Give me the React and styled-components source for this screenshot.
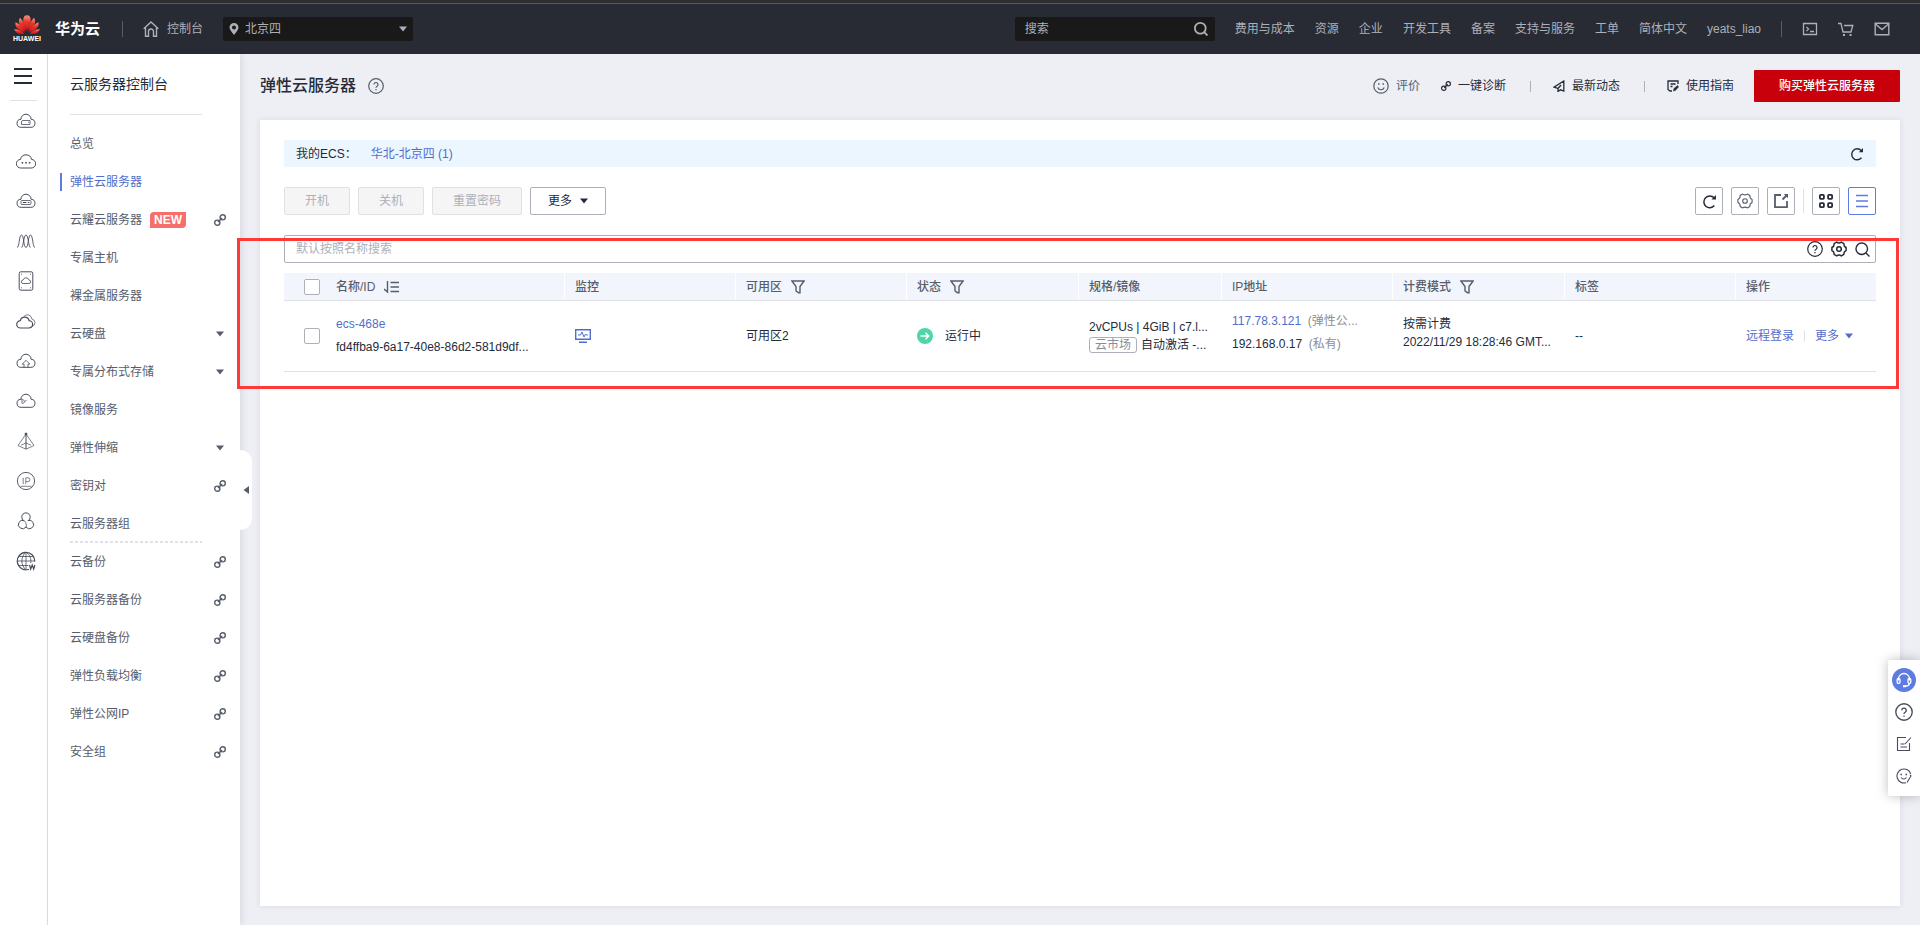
import React from "react";
import styled, { createGlobalStyle } from "styled-components";

const colorText = "#252b3a";
const colorGrey = "#575d6c";
const colorMuted = "#8a8e99";
const colorBorder = "#adb0b8";
const colorLine = "#dfe1e6";
const colorLink = "#526ecc";
const colorRed = "#c7000b";

const cloud =
  "M5.2 16.3a4 4 0 0 1-.3-8A5.1 5.1 0 0 1 15.1 8.300a4 4 0 0 1-.3 8z";

// icons of the service rail, drawn on a 20 x 20 grid
const rail_icons = [
  {
    name: "弹性云服务器",
    shape: (
      <>
        <path d={cloud} />
        <path d="M5.500 13.500h8.500V9.500H7a1.500 1.500 0 0 0-1.500 1.500zM12 11.300h1" strokeWidth="0.8" />
      </>
    )
  },
  {
    name: "云耀云服务器",
    shape: (
      <>
        <path d="M4.800 17a4.300 4.300 0 0 1-.3-8.600 5.600 5.600 0 0 1 11 0 4.300 4.300 0 0 1-.3 8.600z" />
        <path d="M5.600 11.800h1.600M9.200 11.800h1.600M12.800 11.800h1.600" strokeWidth="1.6" />
      </>
    )
  },
  {
    name: "裸金属服务器",
    shape: (
      <>
        <path d={cloud} />
        <rect x="5" y="9.500" width="10" height="4" rx="0.8" strokeWidth="0.8" />
        <path d="M6.800 11.500h3.600M11.800 11.500h1.600" />
      </>
    )
  },
  {
    name: "弹性伸缩",
    shape: (
      <path
        d="M1 16.500C3.500 16.500 3 4 5.500 4S7.500 16.500 10 16.500 12 4 14.500 4 16.500 16.500 19 16.500M5.500 16.500C7.500 16.500 7.500 4 10 4s2.500 12.500 4.500 12.500"
        strokeWidth="0.9"
      />
    )
  },
  {
    name: "云硬盘",
    shape: (
      <>
        <rect x="3.200" y="0.800" width="13.600" height="18.400" rx="1.600" />
        <path d="M7 12.500a1.700 1.700 0 0 1 0-3.400 3.100 3.100 0 0 1 6 0 1.700 1.700 0 0 1 0 3.400z" strokeWidth="0.8" />
        <path d="M5 3.200h.8M14.200 3.200h.8M5 16.800h.8M14.200 16.800h.8" />
      </>
    )
  },
  {
    name: "专属云",
    shape: (
      <>
        <path d="M4.600 17a3.700 3.700 0 0 1-.3-7.400 4.500 4.500 0 0 1 8.800 0A3.700 3.700 0 0 1 12.800 17z" strokeWidth="1.200" />
        <path d="M8 5.400a4.500 4.500 0 0 1 7.900 2.700A3.700 3.700 0 0 1 16.300 15.300" strokeWidth="0.7" />
      </>
    )
  },
  {
    name: "云备份",
    shape: (
      <>
        <path d={cloud} />
        <path d="M8 16.300v-3.200H6.200L10 9.300l3.800 3.800H12v3.200" strokeWidth="0.8" />
      </>
    )
  },
  {
    name: "镜像服务",
    shape: (
      <>
        <path d={cloud} />
        <path d="M4.900 8.300c2.300-.3 3.300.8 3.400 2.400M6 12.500V9M6.500 13l4-4" strokeWidth="0.8" />
      </>
    )
  },
  {
    name: "虚拟私有云",
    shape: (
      <>
        <path d="M10 3L2 14.500l8 3.700 8-3.700zM5 14.200l5-2.200 5 2.200" strokeWidth="0.7" />
        <circle cx="10" cy="3" r="1" fill="currentColor" />
        <path d="M10 3v15" />
      </>
    )
  },
  {
    name: "弹性公网IP",
    shape: (
      <>
        <circle cx="10" cy="10" r="8.600" strokeWidth="0.9" />
        <path d="M7.200 6.800v6.400M9.800 13.200V6.800h2.200a1.900 1.900 0 0 1 0 3.800H9.800M4.500 15.300h11" strokeWidth="0.7" />
      </>
    )
  },
  {
    name: "弹性负载均衡",
    shape: (
      <>
        <path d="M7.200 9.200a4.200 4.200 0 1 1 5.600 0" />
        <path d="M8.300 9.700a4.200 4.200 0 1 0 1.700 6.300 4.200 4.200 0 1 0 1.700-6.300" />
        <path d="M10 16c.8-1.600.3-4-1.700-6.300" strokeWidth="0.8" />
      </>
    )
  },
  {
    name: "域名注册",
    shape: (
      <>
        <path d="M13 18.200A8.700 8.700 0 1 1 18.700 10.500" strokeWidth="1.200" />
        <path d="M10 1.200v17.600M1.200 10h17.600M2.500 5.500h15M2.500 14.500h10M10 1.200c-5.500 4.500-5.500 13 0 17.600M10 1.200c4.500 2.800 5.300 6.800 4.700 10.800" strokeWidth="0.8" />
        <path d="M13.500 14l1.200 4 1.500-4 1.500 4 1.200-4" strokeWidth="1.200" />
      </>
    )
  }
];

const menu_list = [
  { label: "总览" },
  { label: "弹性云服务器", active: true },
  { label: "云耀云服务器", badge: "NEW", end: "link" },
  { label: "专属主机" },
  { label: "裸金属服务器" },
  { label: "云硬盘", end: "caret" },
  { label: "专属分布式存储", end: "caret" },
  { label: "镜像服务" },
  { label: "弹性伸缩", end: "caret" },
  { label: "密钥对", end: "link" },
  { label: "云服务器组", divider: true },
  { label: "云备份", end: "link" },
  { label: "云服务器备份", end: "link" },
  { label: "云硬盘备份", end: "link" },
  { label: "弹性负载均衡", end: "link" },
  { label: "弹性公网IP", end: "link" },
  { label: "安全组", end: "link" }
];

const header_links = [
  "费用与成本",
  "资源",
  "企业",
  "开发工具",
  "备案",
  "支持与服务",
  "工单",
  "简体中文"
];

const GlobalStyle = createGlobalStyle`
  *,
  *::before,
  *::after {
    box-sizing: border-box;
  }

  body {
    margin: 0;
    font-family: "Liberation Sans", "Noto Sans CJK SC", sans-serif;
    font-size: 12px;
    line-height: 18px;
    color: ${colorText};
  }

  button,
  input,
  select {
    font: inherit;
  }

  a {
    text-decoration: none;
  }
`;

const Svg = styled.svg`
  flex: 0 0 auto;
  display: block;
  fill: none;
  stroke: currentColor;
  stroke-width: ${({ $stroke }) => $stroke || 1};
`;

const Icon = ({ size = 16, height, stroke, box = "0 0 16 16", children }) => (
  <Svg
    width={size}
    height={height || size}
    viewBox={box}
    $stroke={stroke}
    aria-hidden="true"
  >
    {children}
  </Svg>
);

const CaretIcon = () => (
  <Icon size={8} height={6} box="0 0 8 6">
    <path d="M0 0.500h8L4 5.500z" fill="currentColor" stroke="none" />
  </Icon>
);

const ChainIcon = ({ size = 12 }) => (
  <Icon size={size} box="0 0 12 12" stroke={1.4}>
    <circle cx="3.300" cy="8.700" r="2.600" />
    <circle cx="8.700" cy="3.300" r="2.600" />
    <path d="M4 8l4-4" strokeWidth="1.600" />
  </Icon>
);

const HelpIcon = ({ size = 16 }) => (
  <Icon size={size} stroke={1.2}>
    <circle cx="8" cy="8" r="7.300" />
    <path d="M6 6.500a2 2 0 1 1 3.100 1.700C8.300 8.700 8 9 8 9.800M8 11v1.300" />
  </Icon>
);

const RefreshIcon = ({ size = 14 }) => (
  <Icon size={size} box="0 0 14 14" stroke={1.4}>
    <path d="M11.500 10.800A5.500 5.500 0 1 1 11.300 3.600" />
    <path d="M13 1v4.200H8.800z" fill="currentColor" stroke="none" />
  </Icon>
);

const SearchIcon = ({ size = 14, stroke = 1.3 }) => (
  <Icon size={size} box="0 0 14 14" stroke={stroke}>
    <circle cx="6.300" cy="6.300" r="5.400" />
    <path d="M10.200 10.200l3.300 3.300" />
  </Icon>
);

const FilterIcon = () => (
  <Icon size={14} box="0 0 14 14" stroke={1.4}>
    <path d="M0.900 1h12.200L9 6.500v6.200H7.500L5 11V6.500z" />
  </Icon>
);

const GearIcon = ({ stroke = 1.1 }) => (
  <Icon size={16} stroke={stroke}>
    <path
      d="M15.100 6.500V9.500Q12.600 10.700 12.900 13.400L10.300 14.900Q8 13.300 5.700 14.900L3.100 13.400Q3.400 10.700 .9 9.500V6.500Q3.400 5.300 3.100 2.600L5.700 1.100Q8 2.700 10.300 1.100L12.900 2.600Q12.600 5.300 15.100 6.500z"
      strokeLinejoin="round"
    />
    <circle cx="8" cy="8" r="2.300" />
  </Icon>
);

const Page = styled.div`
  min-height: 100vh;
  display: flex;
  flex-direction: column;
  background: #eeeff5;
`;

const TopStrip = styled.div`
  height: 4px;
  background: #2e2e2e;
  border-bottom: 1px solid #595a58;
`;

const Header = styled.header`
  height: 50px;
  display: flex;
  align-items: center;
  padding: 0 30px 0 13px;
  background: #282b33;
  color: ${colorBorder};
`;

const Logo = styled.a`
  display: flex;
  align-items: center;
  gap: 14px;
  margin-right: 2px;
  color: #fff;
  font-size: 15px;
  font-weight: 700;
`;

const LogoMark = styled.span`
  display: flex;
  flex-direction: column;
  align-items: center;
  width: 28px;
  font-size: 7px;
  line-height: 8px;
`;

const HeaderRule = styled.span`
  width: 1px;
  height: 16px;
  margin: 0 20px;
  background: #575d6c;
`;

const HeaderLink = styled.a`
  display: flex;
  align-items: center;
  gap: 8px;
  color: ${colorBorder};
`;

const RegionBox = styled.label`
  display: flex;
  align-items: center;
  width: 190px;
  height: 24px;
  margin-left: 20px;
  padding: 0 6px 0 5px;
  border-radius: 2px;
  background: #191919;

  select {
    flex: 1;
    appearance: none;
    padding: 0 0 0 5px;
    border: 0;
    outline: 0;
    background: transparent;
    color: ${colorBorder};
  }
`;

const HeaderSearch = styled.label`
  display: flex;
  align-items: center;
  width: 200px;
  height: 24px;
  margin-left: auto;
  padding: 0 7px 0 10px;
  border-radius: 2px;
  background: #191919;

  input {
    flex: 1;
    min-width: 0;
    padding: 0;
    border: 0;
    outline: 0;
    background: transparent;
    color: ${colorBorder};
  }

  input::placeholder {
    color: ${colorBorder};
    opacity: 1;
  }
`;

const HeaderNav = styled.nav`
  display: flex;
  gap: 20px;
  margin-left: 20px;
`;

const HeaderTools = styled.div`
  display: flex;
  gap: 20px;
`;

const PlainButton = styled.button`
  display: flex;
  align-items: center;
  gap: 6px;
  padding: 0;
  border: 0;
  background: transparent;
  color: inherit;
  cursor: pointer;
`;

const Body = styled.div`
  flex: 1;
  display: flex;
`;

const Rail = styled.nav`
  flex: 0 0 48px;
  padding-top: 14px;
  border-right: 1px solid ${colorLine};
  background: #fff;
`;

const RailToggle = styled(PlainButton)`
  margin-left: 14px;
  color: ${colorText};
`;

const RailList = styled.div`
  margin: 16px 10px 0;
  border-top: 1px solid ${colorLine};
`;

const RailLink = styled.a`
  display: flex;
  align-items: center;
  height: 40px;
  padding-left: 6px;
  color: #464c59;
`;

const Sidebar = styled.aside`
  position: relative;
  flex: 0 0 192px;
  padding-top: 20px;
  background: #fff;
  box-shadow: 2px 0 6px rgba(37, 43, 58, 0.1);
`;

const SidebarTitle = styled.h2`
  margin: 0 38px 10px 22px;
  padding-bottom: 20px;
  border-bottom: 1px solid ${colorLine};
  font-size: 14px;
  line-height: 20px;
  font-weight: 400;
`;

const MenuItem = styled.a`
  display: flex;
  align-items: center;
  height: 38px;
  padding: 0 14px 0 22px;
  color: ${({ $active }) => ($active ? colorLink : colorGrey)};

  &::before {
    content: "";
    display: ${({ $active }) => ($active ? "block" : "none")};
    width: 2px;
    height: 18px;
    margin: 0 8px 0 -10px;
    background: #5e7ce0;
  }
`;

const MenuEnd = styled.span`
  display: flex;
  justify-content: center;
  width: 12px;
  margin-left: auto;
`;

const MenuDivider = styled.hr`
  height: 2px;
  margin: -2px 38px 0 22px;
  border: 0;
  background: repeating-linear-gradient(
    90deg,
    ${colorLine} 0 3px,
    transparent 3px 5px
  );
`;

const NewBadge = styled.span`
  margin-left: 8px;
  padding: 0 4px;
  border-radius: 4px 0 4px 0;
  background: #f66f6a;
  color: #fff;
  font-weight: 700;
  line-height: 16px;
`;

const CollapseHandle = styled.button`
  position: absolute;
  top: 396px;
  left: 100%;
  width: 12px;
  height: 80px;
  padding: 0 0 0 3px;
  border: 0;
  border-radius: 0 12px 12px 0;
  background: #fff;
  color: ${colorGrey};
`;

const Main = styled.main`
  flex: 1;
  min-width: 0;
  display: flex;
  flex-direction: column;
  padding: 16px 20px 19px;
`;

const TitleRow = styled.div`
  display: flex;
  align-items: center;
  height: 32px;
  margin-bottom: 18px;
`;

const PageTitle = styled.h1`
  margin: 0 12px 0 0;
  font-size: 16px;
  line-height: 24px;
  font-weight: 500;
`;

const Muted = styled.span`
  color: ${({ $light }) => ($light ? colorMuted : colorGrey)};
`;

const TitleActions = styled.div`
  display: flex;
  align-items: center;
  margin-left: auto;
`;

const ActionLink = styled.a`
  display: flex;
  align-items: center;
  gap: 7px;
  color: ${({ $grey }) => ($grey ? colorGrey : colorText)};
`;

const ActionGap = styled.span`
  width: 1px;
  height: 11px;
  margin: ${({ $blank }) => ($blank ? "0 10px" : "0 22px 0 24px")};
  background: ${({ $blank }) => ($blank ? "transparent" : colorBorder)};
`;

const BuyButton = styled.button`
  height: 32px;
  margin-left: 20px;
  padding: 0 25px;
  border: 0;
  border-radius: 1px;
  background: ${colorRed};
  color: #fff;
  font-weight: 500;
`;

const Card = styled.section`
  flex: 1;
  padding: 20px 24px;
  background: #fff;
  box-shadow: 0 0 6px rgba(37, 43, 58, 0.1);
`;

const Banner = styled.div`
  display: flex;
  align-items: center;
  height: 27px;
  margin-bottom: 20px;
  padding: 0 12px;
  border-radius: 2px;
  background: #ebf6ff;

  button {
    margin-left: auto;
  }
`;

const TextLink = styled.a`
  color: ${colorLink};
`;

const Toolbar = styled.div`
  display: flex;
  align-items: center;
  gap: 8px;
  margin-bottom: 20px;
`;

const ToolButton = styled.button`
  display: flex;
  align-items: center;
  gap: 8px;
  height: 28px;
  padding: 0 ${({ $pad }) => $pad || 20}px;
  border: 1px solid ${colorBorder};
  border-radius: 2px;
  background: #fff;
  color: ${colorText};

  &:disabled {
    border-color: ${colorLine};
    background: #f5f5f6;
    color: ${colorBorder};
  }
`;

const IconButton = styled.button`
  display: flex;
  align-items: center;
  justify-content: center;
  width: 28px;
  height: 28px;
  padding: 0;
  border: 1px solid ${({ $active }) => ($active ? "#5e7ce0" : colorBorder)};
  border-radius: 2px;
  background: #fff;
  color: ${({ $active, $grey }) =>
    $active ? "#5e7ce0" : $grey ? colorGrey : colorText};
`;

const ToolRule = styled.span`
  width: 1px;
  height: 24px;
  background: ${colorLine};
`;

const Spacer = styled.span`
  flex: 1;
`;

const ListArea = styled.div`
  position: relative;
`;

const Highlight = styled.div`
  position: absolute;
  inset: 3px -23px -17px -47px;
  border: 3px solid #ff3838;
  pointer-events: none;
  z-index: 2;
`;

const SearchBar = styled.div`
  display: flex;
  align-items: center;
  gap: 8px;
  height: 28px;
  margin-bottom: 10px;
  padding: 0 5px 0 11px;
  border: 1px solid ${colorBorder};
  border-radius: 2px;

  input {
    flex: 1;
    padding: 0;
    border: 0;
    outline: 0;
    background: transparent;
  }

  input::placeholder {
    color: ${colorBorder};
    opacity: 1;
  }
`;

const Table = styled.table`
  width: 100%;
  table-layout: fixed;
  border-collapse: separate;
  border-spacing: 0;
`;

const Th = styled.th`
  width: ${({ $width }) => $width}px;
  height: 28px;
  padding: 0 0 0 ${({ $pad = 10 }) => $pad}px;
  border-bottom: 1px solid ${colorLine};
  background: #f2f5fc;
  box-shadow: ${({ $rule }) => ($rule ? "inset -1px 0 #fff" : "none")};
  color: ${colorGrey};
  font-weight: 500;
  line-height: 16px;
  text-align: left;
`;

const ThInner = styled.span`
  display: flex;
  align-items: center;
  gap: 9px;
`;

const Td = styled.td`
  height: 71px;
  padding: 0 0 ${({ $raised }) => ($raised ? 6 : 0)}px
    ${({ $pad = 10 }) => $pad}px;
  border-bottom: 1px solid ${colorLine};
  white-space: nowrap;
`;

const Checkbox = styled.input`
  appearance: none;
  display: block;
  width: 16px;
  height: 16px;
  margin: 0;
  border: 1px solid ${colorBorder};
  border-radius: 2px;
  background: #fff;
`;

const Line = styled.div`
  line-height: ${({ $tall }) => ($tall ? 23 : 18)}px;
`;

const Inline = styled.div`
  display: flex;
  align-items: center;
  gap: ${({ $gap }) => $gap}px;
`;

const Tag = styled.span`
  padding: 0 5px;
  border: 1px solid ${colorBorder};
  border-radius: 3px;
  color: ${colorMuted};
  line-height: 14px;
`;

const RowRule = styled.span`
  width: 1px;
  height: 12px;
  background: ${colorLine};
`;

const Floating = styled.div`
  position: fixed;
  right: 0;
  bottom: 129px;
  z-index: 3;
  display: flex;
  flex-direction: column;
  align-items: center;
  gap: 8px;
  width: 32px;
  height: 136px;
  padding-top: 8px;
  background: #fff;
  box-shadow: 0 0 12px rgba(0, 0, 0, 0.25);
  color: #464c59;
`;

const FloatButton = styled(PlainButton)`
  justify-content: center;
  width: 24px;
  height: 24px;
  border-radius: 50%;
  background: ${({ $primary }) => ($primary ? "#5e7ce0" : "transparent")};
  color: ${({ $primary }) => ($primary ? "#fff" : "inherit")};
`;

const HuaweiMark = () => (
  <Svg width="26" height="20" viewBox="0 0 26 20" aria-hidden="true">
    <defs>
      <linearGradient id="petal" x1="0" y1="0" x2="0" y2="1">
        <stop offset="0" stopColor="#f5a08a" />
        <stop offset="0.4" stopColor="#e8392c" />
        <stop offset="1" stopColor="#c8101a" />
      </linearGradient>
    </defs>
    <g fill="url(#petal)" stroke="none">
      <path d="M12.600 16C8.500 9.500 8 3 11.300.6l1.400-.3c.8 4 .7 10-.1 15.700z" />
      <path d="M13.400 16C17.500 9.500 18 3 14.700.6l-1.400-.3c-.8 4-.7 10 .1 15.700z" />
      <path d="M11.600 16.800C5 11.500 3.500 6.500 6 2.700c3.500 3.300 5 8.500 5.600 14.100z" />
      <path d="M14.400 16.800C21 11.500 22.500 6.500 20 2.700c-3.500 3.300-5 8.500-5.600 14.100z" />
      <path d="M10.900 17.600C3.500 15 .5 11.500 1.600 7.300c4.500 2 7.500 5.800 9.300 10.300z" />
      <path d="M15.100 17.600c7.400-2.600 10.400-6.100 9.300-10.300-4.500 2-7.500 5.800-9.300 10.300z" />
      <path d="M10.300 18.400C5.500 20 1.800 18.500.2 14.200c4 0 7.500 1.700 10.100 4.200z" />
      <path d="M15.700 18.400c4.800 1.600 8.500.1 10.100-4.200-4 0-7.500 1.700-10.100 4.200z" />
    </g>
  </Svg>
);

const TopHeader = () => (
  <Header>
    <Logo href="#">
      <LogoMark>
        <HuaweiMark />
        HUAWEI
      </LogoMark>
      华为云
    </Logo>
    <HeaderRule />
    <HeaderLink href="#">
      <Icon stroke={1.4}>
        <path d="M.7 7.800L8 1l7.300 6.800M2.500 6.500v8.700h3V10.500a2.500 2.500 0 0 1 5 0v4.700h3V6.500" />
      </Icon>
      控制台
    </HeaderLink>
    <RegionBox>
      <Icon size={12} box="0 0 12 12">
        <path
          d="M6 0a4.500 4.500 0 0 0-4.500 4.500C1.500 7 4 9 6 12c2-3 4.500-5 4.500-7.500A4.500 4.500 0 0 0 6 0zm0 2.500a2 2 0 1 1 0 4 2 2 0 0 1 0-4z"
          fill="currentColor"
          stroke="none"
        />
      </Icon>
      <select aria-label="区域" defaultValue="北京四">
        <option>北京四</option>
      </select>
      <CaretIcon />
    </RegionBox>
    <HeaderSearch>
      <input type="text" placeholder="搜索" aria-label="搜索" />
      <SearchIcon stroke={1.8} />
    </HeaderSearch>
    <HeaderNav>
      {header_links.map(label => (
        <HeaderLink href="#" key={label}>
          {label}
        </HeaderLink>
      ))}
      <HeaderLink href="#">yeats_liao</HeaderLink>
    </HeaderNav>
    <HeaderRule />
    <HeaderTools>
      <PlainButton aria-label="CloudShell">
        <Icon stroke={1.3}>
          <path d="M1.500 2.500h13v11h-13zM4.500 6l2 2-2 2M8 10.500h4" />
        </Icon>
      </PlainButton>
      <PlainButton aria-label="购物车">
        <Icon stroke={1.3}>
          <path d="M0 2.500h3l2 8.500h8l1.800-6.500H6" />
          <path d="M5 14h2M11.500 14h2" strokeWidth="2" />
        </Icon>
      </PlainButton>
      <PlainButton aria-label="消息">
        <Icon stroke={1.4}>
          <path d="M1.200 2.200h13.600v11.600H1.200zM1.500 3L8 8.500 14.500 3" />
        </Icon>
      </PlainButton>
    </HeaderTools>
  </Header>
);

const SideMenu = () => (
  <Sidebar>
    <SidebarTitle>云服务器控制台</SidebarTitle>
    <nav>
      {menu_list.map(({ label, active, badge, end, divider }) => (
        <React.Fragment key={label}>
          <MenuItem href="#" $active={active}>
            {label}
            {badge && <NewBadge>{badge}</NewBadge>}
            {end && (
              <MenuEnd>{end === "link" ? <ChainIcon /> : <CaretIcon />}</MenuEnd>
            )}
          </MenuItem>
          {divider && <MenuDivider />}
        </React.Fragment>
      ))}
    </nav>
    <CollapseHandle aria-label="收起">
      <Icon size={6} height={8} box="0 0 6 8">
        <path d="M6 0v8L.5 4z" fill="currentColor" stroke="none" />
      </Icon>
    </CollapseHandle>
  </Sidebar>
);

const ServerTable = () => (
  <Table>
    <thead>
      <tr>
        <Th $width={52} $pad={20}>
          <Checkbox type="checkbox" aria-label="全选" />
        </Th>
        <Th $width={229} $pad={0} $rule>
          <ThInner>
            名称/ID
            <Icon size={16} stroke={1.4}>
              <path d="M3.500 2v11L0 10M6.500 3.500H15M6.500 8H15M6.500 12.500H15" />
            </Icon>
          </ThInner>
        </Th>
        <Th $width={171} $rule>
          监控
        </Th>
        <Th $width={171} $rule>
          <ThInner>
            可用区
            <FilterIcon />
          </ThInner>
        </Th>
        <Th $width={172} $rule>
          <ThInner>
            状态
            <FilterIcon />
          </ThInner>
        </Th>
        <Th $width={143} $rule>
          规格/镜像
        </Th>
        <Th $width={171} $rule>
          IP地址
        </Th>
        <Th $width={172} $rule>
          <ThInner>
            计费模式
            <FilterIcon />
          </ThInner>
        </Th>
        <Th $width={171} $rule>
          标签
        </Th>
        <Th $width={140}>操作</Th>
      </tr>
    </thead>
    <tbody>
      <tr>
        <Td $pad={20}>
          <Checkbox type="checkbox" aria-label="ecs-468e" />
        </Td>
        <Td $pad={0}>
          <Line $tall>
            <TextLink href="#">ecs-468e</TextLink>
          </Line>
          <Line $tall>fd4ffba9-6a17-40e8-86d2-581d9df...</Line>
        </Td>
        <Td>
          <TextLink href="#" aria-label="监控">
            <Icon stroke={1.4}>
              <path d="M.7 1.700h14.600v9.600H.7zM4 14.300h8" />
              <path d="M3 7h2.500L7 4l2 5 1.500-3 .8 1H13" strokeWidth="1" />
            </Icon>
          </TextLink>
        </Td>
        <Td>可用区2</Td>
        <Td>
          <Inline $gap={12}>
            <Icon size={16}>
              <circle cx="8" cy="8" r="8" fill="#50d4ab" stroke="none" />
              <path
                d="M3.500 8h8M8.500 4.800L11.700 8l-3.200 3.200"
                stroke="#fff"
                strokeWidth="1.500"
              />
            </Icon>
            运行中
          </Inline>
        </Td>
        <Td>
          <Line>2vCPUs | 4GiB | c7.l...</Line>
          <Inline $gap={4}>
            <Tag>云市场</Tag>
            <span>自动激活 -...</span>
          </Inline>
        </Td>
        <Td $raised>
          <Line $tall>
            <TextLink href="#">117.78.3.121</TextLink>{" "}
            <Muted $light>&nbsp;(弹性公...</Muted>
          </Line>
          <Line $tall>
            192.168.0.17 <Muted $light>&nbsp;(私有)</Muted>
          </Line>
        </Td>
        <Td $raised>
          <Line>按需计费</Line>
          <Line>2022/11/29 18:28:46 GMT...</Line>
        </Td>
        <Td>--</Td>
        <Td>
          <Inline $gap={10}>
            <TextLink href="#">远程登录</TextLink>
            <RowRule />
            <TextLink as={PlainButton}>
              更多
              <CaretIcon />
            </TextLink>
          </Inline>
        </Td>
      </tr>
    </tbody>
  </Table>
);

const App = () => (
  <Page>
    <GlobalStyle />
    <TopStrip />
    <TopHeader />
    <Body>
      <Rail>
        <RailToggle aria-label="服务列表">
          <Icon size={18} height={16} box="0 0 18 16" stroke={2}>
            <path d="M0 1h18M0 8h18M0 15h18" />
          </Icon>
        </RailToggle>
        <RailList>
          {rail_icons.map(({ name, shape }) => (
            <RailLink href="#" aria-label={name} key={name}>
              <Icon size={20} box="0 0 20 20">
                {shape}
              </Icon>
            </RailLink>
          ))}
        </RailList>
      </Rail>
      <SideMenu />
      <Main>
        <TitleRow>
          <PageTitle>弹性云服务器</PageTitle>
          <Muted>
            <HelpIcon />
          </Muted>
          <TitleActions>
            <ActionLink href="#" $grey>
              <Icon stroke={1.2}>
                <circle cx="8" cy="8" r="7.200" />
                <path d="M4.800 9.500a3.400 3.400 0 0 0 6.400 0" />
                <path d="M5 6h1.500M9.500 6H11" strokeWidth="1.600" />
              </Icon>
              评价
            </ActionLink>
            <ActionGap $blank />
            <ActionLink href="#">
              <ChainIcon size={10} />
              一键诊断
            </ActionLink>
            <ActionGap />
            <ActionLink href="#">
              <Icon size={12} box="0 0 12 12" stroke={1.3}>
                <path d="M10.800 1v10L7.500 9.800 5 11.500V8.500L1 7.200zM5 8.500l3-3.500" />
              </Icon>
              最新动态
            </ActionLink>
            <ActionGap />
            <ActionLink href="#">
              <Icon size={12} box="0 0 12 12" stroke={1.3}>
                <path d="M11 4V1H1v8.500L3 11h2M3.500 4h5M3.500 6.500h2" />
                <path
                  d="M6.500 11l.5-2.500 3.500-3 1 1.500-3 3.300z"
                  fill="currentColor"
                  strokeWidth="0.600"
                />
              </Icon>
              使用指南
            </ActionLink>
            <BuyButton>购买弹性云服务器</BuyButton>
          </TitleActions>
        </TitleRow>
        <Card>
          <Banner>
            <Inline $gap={14}>
              <span>我的ECS：</span>
              <TextLink href="#">华北-北京四 (1)</TextLink>
            </Inline>
            <PlainButton aria-label="刷新">
              <RefreshIcon />
            </PlainButton>
          </Banner>
          <Toolbar>
            <ToolButton disabled>开机</ToolButton>
            <ToolButton disabled>关机</ToolButton>
            <ToolButton disabled>重置密码</ToolButton>
            <ToolButton $pad={17}>
              更多
              <CaretIcon />
            </ToolButton>
            <Spacer />
            <IconButton aria-label="刷新列表">
              <RefreshIcon size={15} />
            </IconButton>
            <IconButton aria-label="设置" $grey>
              <GearIcon />
            </IconButton>
            <IconButton aria-label="导出" $grey>
              <Icon stroke={1.8}>
                <path d="M8 2H2v12.200h12V8M9.500 6.500l4-4" />
                <path d="M10.800 1H15v4.200z" fill="currentColor" stroke="none" />
              </Icon>
            </IconButton>
            <ToolRule />
            <IconButton aria-label="卡片视图">
              <Icon stroke={1.8}>
                <rect x="1.900" y="1.900" width="4" height="4" rx="0.800" />
                <rect x="10.100" y="1.900" width="4" height="4" rx="0.800" />
                <rect x="1.900" y="10.100" width="4" height="4" rx="0.800" />
                <rect x="10.100" y="10.100" width="4" height="4" rx="0.800" />
              </Icon>
            </IconButton>
            <IconButton aria-label="列表视图" $active>
              <Icon size={14} box="0 0 14 14" stroke={1.4}>
                <path d="M1 1.500h12M1 7h12M1 12.500h12" />
              </Icon>
            </IconButton>
          </Toolbar>
          <ListArea>
            <SearchBar>
              <input
                type="text"
                placeholder="默认按照名称搜索"
                aria-label="按照名称搜索"
              />
              <PlainButton aria-label="帮助">
                <HelpIcon />
              </PlainButton>
              <PlainButton aria-label="搜索设置">
                <GearIcon stroke={1.5} />
              </PlainButton>
              <PlainButton aria-label="搜索">
                <SearchIcon size={15} />
              </PlainButton>
            </SearchBar>
            <ServerTable />
            <Highlight />
          </ListArea>
        </Card>
      </Main>
    </Body>
    <Floating>
      <FloatButton $primary aria-label="在线客服">
        <Icon stroke={1.3}>
          <path d="M2.500 8.500V7a5.500 5.500 0 0 1 11 0v1.500M13.500 11c0 2-2 3-4 3" />
          <rect x="1.200" y="6.500" width="2.800" height="4.800" rx="1.200" />
          <rect x="12" y="6.500" width="2.800" height="4.800" rx="1.200" />
          <path d="M7 14.200h3" strokeWidth="2" />
        </Icon>
      </FloatButton>
      <FloatButton aria-label="常见问题">
        <HelpIcon size={18} />
      </FloatButton>
      <FloatButton aria-label="建议反馈">
        <Icon stroke={1.1}>
          <path d="M10 1.500H1.500v13h12V7M15 1.500L9 8M4.500 8h4M4.500 11h6.500" />
        </Icon>
      </FloatButton>
      <FloatButton aria-label="满意度评价">
        <Icon stroke={1.1}>
          <path d="M10 14.700A7 7 0 1 1 14.700 6M5 9.500c1.500 2 4 2 5.500 0M11 14.500l4-6.500-1-.8" />
          <path d="M4.500 6.500H6M9.500 6.500H11" strokeWidth="1.500" />
        </Icon>
      </FloatButton>
    </Floating>
  </Page>
);

export default App;
